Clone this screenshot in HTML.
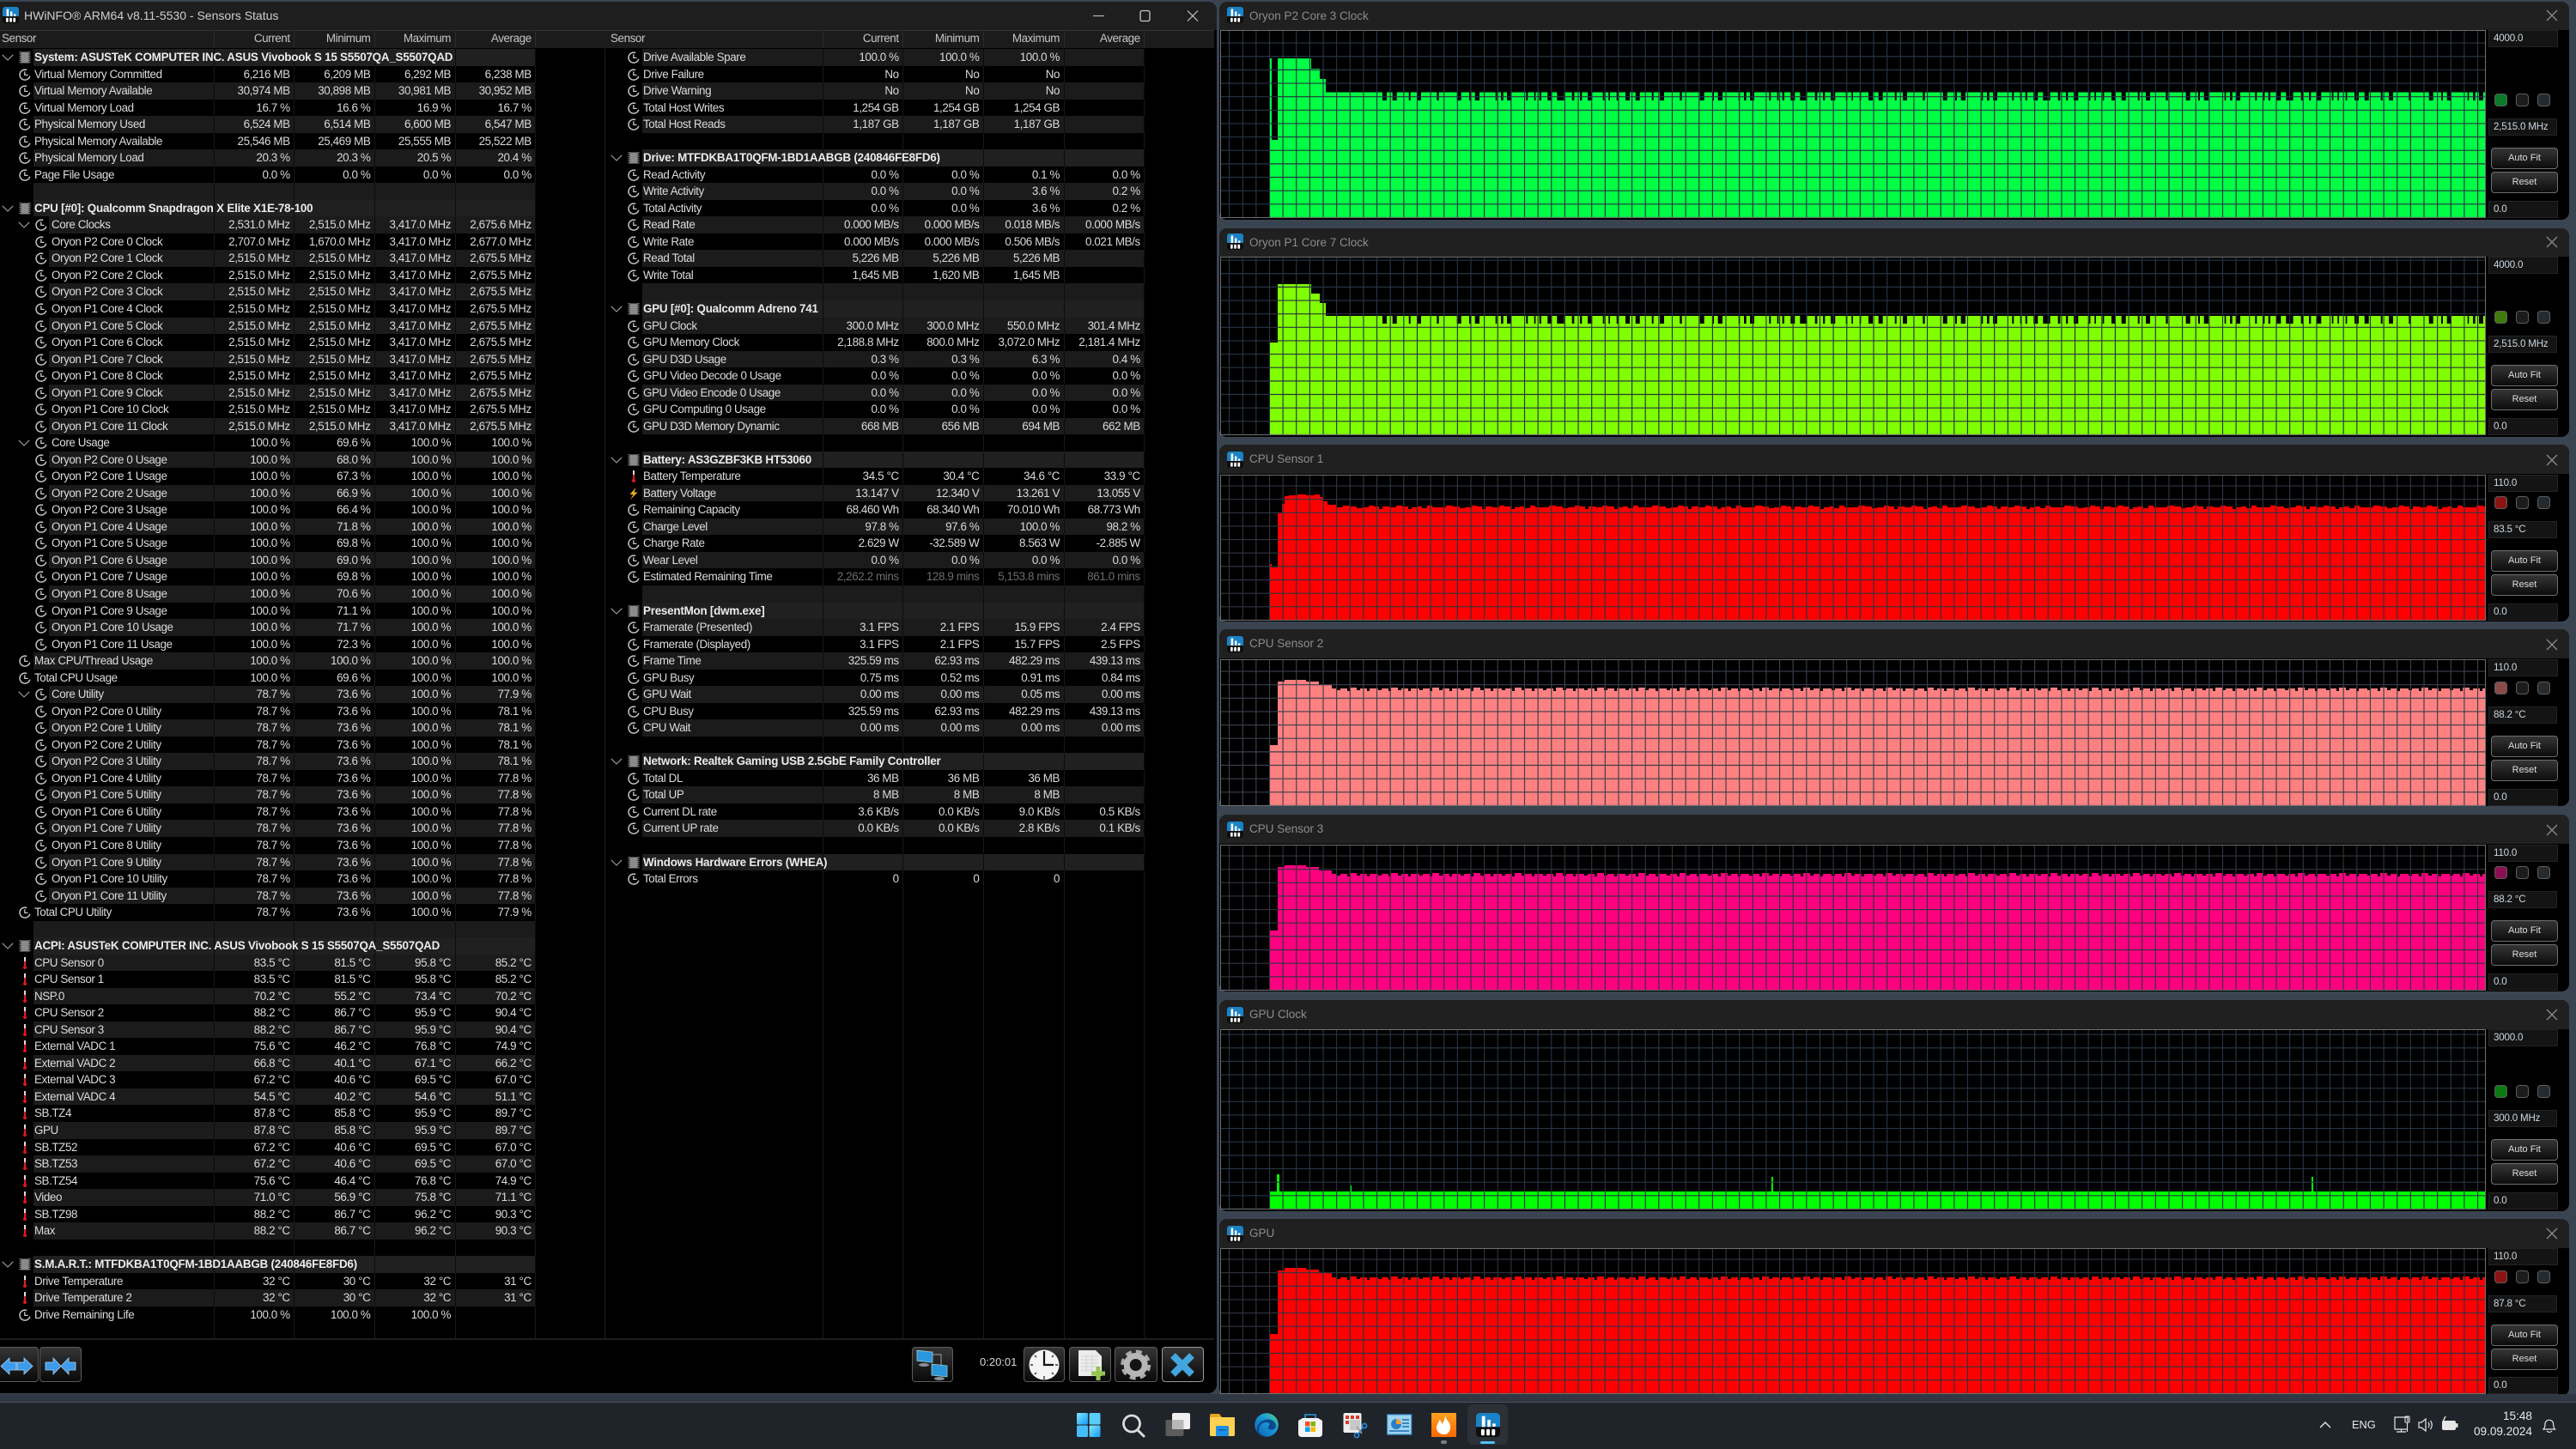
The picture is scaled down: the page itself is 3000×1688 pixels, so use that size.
<!DOCTYPE html>
<html><head><meta charset="utf-8"><title>HWiNFO Sensors Status</title>
<style>
*{box-sizing:border-box}
html,body{margin:0;padding:0}
body{width:3000px;height:1688px;overflow:hidden;position:relative;background:#3a4451;font-family:"Liberation Sans",sans-serif;color:#d6d6d6}
.main{position:absolute;left:-4px;top:2px;width:1421px;height:1621px;background:#000;border-radius:0 10px 10px 0}
.tt{position:absolute;left:0;top:0;width:1421px;height:33px;background:#1e1e1e;border-radius:0 10px 0 0}
.ttx{position:absolute;left:28px;top:9px;font-size:14px;line-height:18px;color:#cfcfcf;white-space:nowrap}
.hbar{position:absolute;left:0;top:35px;width:1414px;height:21px;background:#1b1b1b;border-top:1px solid #333}
.sep{position:absolute;left:704px;top:36px;width:1px;height:1523px;background:#1e1e1e}
.bl{position:absolute;left:0;top:1559px;width:1414px;height:2px;background:#1c1f22}
.pn{position:absolute;top:57px;width:624px;height:1502px;font-size:13.4px;letter-spacing:-.4px;--d:#15191f;background-image:linear-gradient(var(--d),var(--d)),linear-gradient(var(--d),var(--d)),linear-gradient(var(--d),var(--d)),linear-gradient(var(--d),var(--d)),linear-gradient(var(--d),var(--d));background-size:1px 100%;background-repeat:no-repeat;background-position:249px 0,342px 0,436px 0,530px 0,623px 0}
.r{position:relative;display:flex;height:19.54px;line-height:19.54px;padding-left:249px;width:624px;white-space:nowrap;--g:39px}
.l{--g:57px}
.a,.h{--b:#1b1b1b;--d:#0c0c0c;background-image:linear-gradient(var(--d),var(--d)),linear-gradient(var(--d),var(--d)),linear-gradient(var(--d),var(--d)),linear-gradient(var(--d),var(--d)),linear-gradient(var(--d),var(--d)),linear-gradient(90deg,#000 var(--g),var(--b) var(--g));background-size:1px 100%,1px 100%,1px 100%,1px 100%,1px 100%,100% 100%;background-repeat:no-repeat;background-position:249px 0,342px 0,436px 0,530px 0,623px 0,0 0}
.h{--b:#202020}
em{position:absolute;left:40px;top:0;font-style:normal;color:#dcdcdc}
.l em{left:60px}
b{position:absolute;left:40px;top:0;letter-spacing:-.22px;color:#ececec;font-weight:700}
u{display:block;text-decoration:none;width:93.7px;text-align:right;padding-right:5px;color:#dadada}
.g u{color:#6d6d6d}
.r svg{position:absolute}
.c{left:2px;top:6px;width:14px;height:8px}
.l .c{left:21px}
.i{left:22px;top:3px;width:14px;height:14px}
.l .i{left:41px}
.hd{position:absolute;top:36px;height:19px;line-height:18px;font-size:13.4px;letter-spacing:-.4px;color:#c6c6c6;border:0;background-image:linear-gradient(#2c2c2c,#2c2c2c),linear-gradient(#2c2c2c,#2c2c2c),linear-gradient(#2c2c2c,#2c2c2c),linear-gradient(#2c2c2c,#2c2c2c),linear-gradient(#2c2c2c,#2c2c2c);background-size:1px 100%;background-repeat:no-repeat;background-position:249px 0,342px 0,436px 0,530px 0,623px 0}
.hd u{color:#c6c6c6}
.hd em{left:2px;color:#c6c6c6}
.tb{position:absolute;top:1569px;height:41px;border:1px solid #5c5c5c;border-radius:4px;background:linear-gradient(#353535,#090909)}
.tm{position:absolute;left:1141px;top:1578px;font-size:13px;line-height:18px;color:#d3d7db}
.w{position:absolute;left:1420px;width:1572px;background:#000;border-radius:9px}
.wt{position:absolute;left:0;top:0;width:100%;height:33px;background:#202020;border-radius:9px 9px 0 0}
.wn{position:absolute;left:35px;top:8px;font-size:13.5px;line-height:18px;color:#8c8c8c;white-space:nowrap}
.chart{position:absolute;left:1421px;display:block}
.bx{position:absolute;left:2898px;height:20px;width:81px;background:#141414;border:1px solid #232323;font-size:11.6px;line-height:18px;padding-left:5px;letter-spacing:-.2px;color:#cdd6de;white-space:nowrap}
.sq{position:absolute;width:15px;height:15px;border:1.5px solid #5e5e5e;border-radius:4px;background:#1c1c1c}
.bt{position:absolute;left:2901px;width:78px;height:25px;border:1px solid #6e6e6e;border-radius:4px;background:linear-gradient(#353535,#0c0c0c);text-align:center;font-size:11px;line-height:23px;color:#dcdcdc}
.tbar{position:absolute;left:0;top:1633px;width:3000px;height:55px;background:#1f232a;border-top:1px solid #4c5158}
.bnd{position:absolute;left:0;top:1624px;width:3000px;height:9px;background:#2f3842}
.tx{position:absolute;color:#e8eaec;white-space:nowrap}
.ov{position:absolute;left:0;top:0}
</style></head><body>
<svg width="0" height="0" style="position:absolute">
<defs>
<symbol id="k" viewBox="0 0 14 14"><path d="M9.2 1.5A6 6 0 1 0 12.8 8.7" fill="none" stroke="#c8c8c8" stroke-width="1.5"/><path d="M6.8 3.2V7.4H10.6" fill="none" stroke="#c8c8c8" stroke-width="1.3"/></symbol>
<symbol id="p" viewBox="0 0 14 14"><rect x="2.5" y="0.5" width="9" height="13" fill="#8a8a8a"/><path d="M1.5 0V14M12.5 0V14" stroke="#777" stroke-width="2" stroke-dasharray="1.4 1"/></symbol>
<symbol id="t" viewBox="0 0 14 14"><rect x="6" y="0" width="2" height="6" fill="#e8d8d8"/><rect x="6" y="5" width="2" height="7" fill="#e02020"/><circle cx="7" cy="12" r="2" fill="#e01818"/></symbol>
<symbol id="z" viewBox="0 0 14 14"><path d="M9.5 0L2.5 8H6.5L3 14L11.5 5.5H7.5Z" fill="#f0b020"/></symbol>
<symbol id="v" viewBox="0 0 14 8"><path d="M.8 .8L7 7L13.2 .8" fill="none" stroke="#a0a0a0" stroke-width="1.1"/></symbol>
<symbol id="h" viewBox="0 0 19 19"><rect width="19" height="19" rx="3" fill="#0e0e0e"/><path d="M3 0H16A3 3 0 0 1 19 3V11H0V3A3 3 0 0 1 3 0Z" fill="#1b82c5"/><rect x="4.6" y="2.5" width="2.6" height="8.5" fill="#fff"/><rect x="9" y="5.5" width="2.4" height="5.5" fill="#fff"/><rect x="13" y="8.4" width="2.4" height="2.4" fill="#fff"/><rect x="4" y="12.8" width="2.7" height="5" rx="1" fill="#fff"/><rect x="8.2" y="12.8" width="2.7" height="5" rx="1" fill="#fff"/><rect x="12.4" y="12.8" width="2.7" height="5" rx="1" fill="#fff"/></symbol>
<pattern id="n" patternUnits="userSpaceOnUse" width="283" height="300"><path fill="#000" d="M0 0h5V300H0zM11.7 0h5V300h-5zM30.7 0h2V300h-2zM40 0h5V300h-5zM63.3 0h2.4V300h-2.4zM86.7 0h5V300h-5zM101 0h2V300h-2zM107.7 0h5.3V300h-5.3zM131.7 0h1.6V300h-1.6zM138 0h2.7V300h-2.7zM145 0h5V300h-5zM167.3 0h2V300h-2zM176.7 0h1.7V300h-1.7zM182.7 0h2.3V300h-2.3zM192.3 0h5V300h-5zM203.3 0h8.3V300h-8.3zM220.7 0h2.7V300h-2.7zM230 0h2.3V300H230zM239 0h5.3V300H239zM256.7 0h1.7V300h-1.7zM263.3 0h1.7V300h-1.7zM272.7 0h1.7V300h-1.7z"/></pattern>
<pattern id="j" patternUnits="userSpaceOnUse" width="120" height="8"><path fill="#000" d="M0 0H120V3H112V1H106V4H100V2H94V3H88V5H84V2H76V1H70V3H62V2H54V5H50V2H44V1H38V3H30V4H24V2H16V1H8V3H0Z"/></pattern>
<pattern id="e" patternUnits="userSpaceOnUse" width="48" height="8"><path fill="#000" d="M0 0H48V2H44V5H41V2H33V4H29V1H21V5H18V2H10V4H6V2H0Z"/></pattern>
<linearGradient id="wg" x1="0" y1="0" x2="1" y2="1"><stop offset="0" stop-color="#85e6ff"/><stop offset="1" stop-color="#129af0"/></linearGradient>
<linearGradient id="eg" x1="0" y1="1" x2="1" y2="0"><stop offset="0" stop-color="#0b5fb0"/><stop offset=".6" stop-color="#1c9ad8"/><stop offset="1" stop-color="#4fd88a"/></linearGradient>
<linearGradient id="fg" x1="0" y1="0" x2="0" y2="1"><stop offset="0" stop-color="#ffa020"/><stop offset="1" stop-color="#ff6a00"/></linearGradient>
</defs>
</svg>

<div class="main"><div class="tt"></div></div>
<svg class="ov" style="left:3px;top:8px" width="19" height="19"><use href="#h"/></svg>
<div class="ttx">HWiNFO® ARM64 v8.11-5530 - Sensors Status</div>
<svg class="ov" style="left:1270px;top:10px" width="130" height="18"><path d="M3 8.5H16" stroke="#b8b8b8" stroke-width="1.2"/><rect x="58" y="2.5" width="11" height="12" rx="2" fill="none" stroke="#c8c8c8" stroke-width="1.3"/><path d="M113 2.5L125 14.5M125 2.5L113 14.5" stroke="#c8c8c8" stroke-width="1.2"/></svg>
<div class="hbar"></div>
<div class="sep"></div>
<div class="r hd" style="left:0"><em>Sensor</em><u>Current</u><u>Minimum</u><u>Maximum</u><u>Average</u></div>
<div class="r hd" style="left:709px"><em>Sensor</em><u>Current</u><u>Minimum</u><u>Maximum</u><u>Average</u></div>

<div class="pn" style="left:0">
<div class="r h"><svg class="c"><use href="#v"/></svg><svg class="i"><use href="#p"/></svg><b>System: ASUSTeK COMPUTER INC. ASUS Vivobook S 15 S5507QA_S5507QAD</b></div>
<div class="r"><svg class="i"><use href="#k"/></svg><em>Virtual Memory Committed</em><u>6,216 MB</u><u>6,209 MB</u><u>6,292 MB</u><u>6,238 MB</u></div>
<div class="r a"><svg class="i"><use href="#k"/></svg><em>Virtual Memory Available</em><u>30,974 MB</u><u>30,898 MB</u><u>30,981 MB</u><u>30,952 MB</u></div>
<div class="r"><svg class="i"><use href="#k"/></svg><em>Virtual Memory Load</em><u>16.7 %</u><u>16.6 %</u><u>16.9 %</u><u>16.7 %</u></div>
<div class="r a"><svg class="i"><use href="#k"/></svg><em>Physical Memory Used</em><u>6,524 MB</u><u>6,514 MB</u><u>6,600 MB</u><u>6,547 MB</u></div>
<div class="r"><svg class="i"><use href="#k"/></svg><em>Physical Memory Available</em><u>25,546 MB</u><u>25,469 MB</u><u>25,555 MB</u><u>25,522 MB</u></div>
<div class="r a"><svg class="i"><use href="#k"/></svg><em>Physical Memory Load</em><u>20.3 %</u><u>20.3 %</u><u>20.5 %</u><u>20.4 %</u></div>
<div class="r"><svg class="i"><use href="#k"/></svg><em>Page File Usage</em><u>0.0 %</u><u>0.0 %</u><u>0.0 %</u><u>0.0 %</u></div>
<div class="r a"></div>
<div class="r h"><svg class="c"><use href="#v"/></svg><svg class="i"><use href="#p"/></svg><b>CPU [#0]: Qualcomm Snapdragon X Elite X1E-78-100</b></div>
<div class="r a l"><svg class="c"><use href="#v"/></svg><svg class="i"><use href="#k"/></svg><em>Core Clocks</em><u>2,531.0 MHz</u><u>2,515.0 MHz</u><u>3,417.0 MHz</u><u>2,675.6 MHz</u></div>
<div class="r l"><svg class="i"><use href="#k"/></svg><em>Oryon P2 Core 0 Clock</em><u>2,707.0 MHz</u><u>1,670.0 MHz</u><u>3,417.0 MHz</u><u>2,677.0 MHz</u></div>
<div class="r a l"><svg class="i"><use href="#k"/></svg><em>Oryon P2 Core 1 Clock</em><u>2,515.0 MHz</u><u>2,515.0 MHz</u><u>3,417.0 MHz</u><u>2,675.5 MHz</u></div>
<div class="r l"><svg class="i"><use href="#k"/></svg><em>Oryon P2 Core 2 Clock</em><u>2,515.0 MHz</u><u>2,515.0 MHz</u><u>3,417.0 MHz</u><u>2,675.5 MHz</u></div>
<div class="r a l"><svg class="i"><use href="#k"/></svg><em>Oryon P2 Core 3 Clock</em><u>2,515.0 MHz</u><u>2,515.0 MHz</u><u>3,417.0 MHz</u><u>2,675.5 MHz</u></div>
<div class="r l"><svg class="i"><use href="#k"/></svg><em>Oryon P1 Core 4 Clock</em><u>2,515.0 MHz</u><u>2,515.0 MHz</u><u>3,417.0 MHz</u><u>2,675.5 MHz</u></div>
<div class="r a l"><svg class="i"><use href="#k"/></svg><em>Oryon P1 Core 5 Clock</em><u>2,515.0 MHz</u><u>2,515.0 MHz</u><u>3,417.0 MHz</u><u>2,675.5 MHz</u></div>
<div class="r l"><svg class="i"><use href="#k"/></svg><em>Oryon P1 Core 6 Clock</em><u>2,515.0 MHz</u><u>2,515.0 MHz</u><u>3,417.0 MHz</u><u>2,675.5 MHz</u></div>
<div class="r a l"><svg class="i"><use href="#k"/></svg><em>Oryon P1 Core 7 Clock</em><u>2,515.0 MHz</u><u>2,515.0 MHz</u><u>3,417.0 MHz</u><u>2,675.5 MHz</u></div>
<div class="r l"><svg class="i"><use href="#k"/></svg><em>Oryon P1 Core 8 Clock</em><u>2,515.0 MHz</u><u>2,515.0 MHz</u><u>3,417.0 MHz</u><u>2,675.5 MHz</u></div>
<div class="r a l"><svg class="i"><use href="#k"/></svg><em>Oryon P1 Core 9 Clock</em><u>2,515.0 MHz</u><u>2,515.0 MHz</u><u>3,417.0 MHz</u><u>2,675.5 MHz</u></div>
<div class="r l"><svg class="i"><use href="#k"/></svg><em>Oryon P1 Core 10 Clock</em><u>2,515.0 MHz</u><u>2,515.0 MHz</u><u>3,417.0 MHz</u><u>2,675.5 MHz</u></div>
<div class="r a l"><svg class="i"><use href="#k"/></svg><em>Oryon P1 Core 11 Clock</em><u>2,515.0 MHz</u><u>2,515.0 MHz</u><u>3,417.0 MHz</u><u>2,675.5 MHz</u></div>
<div class="r l"><svg class="c"><use href="#v"/></svg><svg class="i"><use href="#k"/></svg><em>Core Usage</em><u>100.0 %</u><u>69.6 %</u><u>100.0 %</u><u>100.0 %</u></div>
<div class="r a l"><svg class="i"><use href="#k"/></svg><em>Oryon P2 Core 0 Usage</em><u>100.0 %</u><u>68.0 %</u><u>100.0 %</u><u>100.0 %</u></div>
<div class="r l"><svg class="i"><use href="#k"/></svg><em>Oryon P2 Core 1 Usage</em><u>100.0 %</u><u>67.3 %</u><u>100.0 %</u><u>100.0 %</u></div>
<div class="r a l"><svg class="i"><use href="#k"/></svg><em>Oryon P2 Core 2 Usage</em><u>100.0 %</u><u>66.9 %</u><u>100.0 %</u><u>100.0 %</u></div>
<div class="r l"><svg class="i"><use href="#k"/></svg><em>Oryon P2 Core 3 Usage</em><u>100.0 %</u><u>66.4 %</u><u>100.0 %</u><u>100.0 %</u></div>
<div class="r a l"><svg class="i"><use href="#k"/></svg><em>Oryon P1 Core 4 Usage</em><u>100.0 %</u><u>71.8 %</u><u>100.0 %</u><u>100.0 %</u></div>
<div class="r l"><svg class="i"><use href="#k"/></svg><em>Oryon P1 Core 5 Usage</em><u>100.0 %</u><u>69.8 %</u><u>100.0 %</u><u>100.0 %</u></div>
<div class="r a l"><svg class="i"><use href="#k"/></svg><em>Oryon P1 Core 6 Usage</em><u>100.0 %</u><u>69.0 %</u><u>100.0 %</u><u>100.0 %</u></div>
<div class="r l"><svg class="i"><use href="#k"/></svg><em>Oryon P1 Core 7 Usage</em><u>100.0 %</u><u>69.8 %</u><u>100.0 %</u><u>100.0 %</u></div>
<div class="r a l"><svg class="i"><use href="#k"/></svg><em>Oryon P1 Core 8 Usage</em><u>100.0 %</u><u>70.6 %</u><u>100.0 %</u><u>100.0 %</u></div>
<div class="r l"><svg class="i"><use href="#k"/></svg><em>Oryon P1 Core 9 Usage</em><u>100.0 %</u><u>71.1 %</u><u>100.0 %</u><u>100.0 %</u></div>
<div class="r a l"><svg class="i"><use href="#k"/></svg><em>Oryon P1 Core 10 Usage</em><u>100.0 %</u><u>71.7 %</u><u>100.0 %</u><u>100.0 %</u></div>
<div class="r l"><svg class="i"><use href="#k"/></svg><em>Oryon P1 Core 11 Usage</em><u>100.0 %</u><u>72.3 %</u><u>100.0 %</u><u>100.0 %</u></div>
<div class="r a"><svg class="i"><use href="#k"/></svg><em>Max CPU/Thread Usage</em><u>100.0 %</u><u>100.0 %</u><u>100.0 %</u><u>100.0 %</u></div>
<div class="r"><svg class="i"><use href="#k"/></svg><em>Total CPU Usage</em><u>100.0 %</u><u>69.6 %</u><u>100.0 %</u><u>100.0 %</u></div>
<div class="r a l"><svg class="c"><use href="#v"/></svg><svg class="i"><use href="#k"/></svg><em>Core Utility</em><u>78.7 %</u><u>73.6 %</u><u>100.0 %</u><u>77.9 %</u></div>
<div class="r l"><svg class="i"><use href="#k"/></svg><em>Oryon P2 Core 0 Utility</em><u>78.7 %</u><u>73.6 %</u><u>100.0 %</u><u>78.1 %</u></div>
<div class="r a l"><svg class="i"><use href="#k"/></svg><em>Oryon P2 Core 1 Utility</em><u>78.7 %</u><u>73.6 %</u><u>100.0 %</u><u>78.1 %</u></div>
<div class="r l"><svg class="i"><use href="#k"/></svg><em>Oryon P2 Core 2 Utility</em><u>78.7 %</u><u>73.6 %</u><u>100.0 %</u><u>78.1 %</u></div>
<div class="r a l"><svg class="i"><use href="#k"/></svg><em>Oryon P2 Core 3 Utility</em><u>78.7 %</u><u>73.6 %</u><u>100.0 %</u><u>78.1 %</u></div>
<div class="r l"><svg class="i"><use href="#k"/></svg><em>Oryon P1 Core 4 Utility</em><u>78.7 %</u><u>73.6 %</u><u>100.0 %</u><u>77.8 %</u></div>
<div class="r a l"><svg class="i"><use href="#k"/></svg><em>Oryon P1 Core 5 Utility</em><u>78.7 %</u><u>73.6 %</u><u>100.0 %</u><u>77.8 %</u></div>
<div class="r l"><svg class="i"><use href="#k"/></svg><em>Oryon P1 Core 6 Utility</em><u>78.7 %</u><u>73.6 %</u><u>100.0 %</u><u>77.8 %</u></div>
<div class="r a l"><svg class="i"><use href="#k"/></svg><em>Oryon P1 Core 7 Utility</em><u>78.7 %</u><u>73.6 %</u><u>100.0 %</u><u>77.8 %</u></div>
<div class="r l"><svg class="i"><use href="#k"/></svg><em>Oryon P1 Core 8 Utility</em><u>78.7 %</u><u>73.6 %</u><u>100.0 %</u><u>77.8 %</u></div>
<div class="r a l"><svg class="i"><use href="#k"/></svg><em>Oryon P1 Core 9 Utility</em><u>78.7 %</u><u>73.6 %</u><u>100.0 %</u><u>77.8 %</u></div>
<div class="r l"><svg class="i"><use href="#k"/></svg><em>Oryon P1 Core 10 Utility</em><u>78.7 %</u><u>73.6 %</u><u>100.0 %</u><u>77.8 %</u></div>
<div class="r a l"><svg class="i"><use href="#k"/></svg><em>Oryon P1 Core 11 Utility</em><u>78.7 %</u><u>73.6 %</u><u>100.0 %</u><u>77.8 %</u></div>
<div class="r"><svg class="i"><use href="#k"/></svg><em>Total CPU Utility</em><u>78.7 %</u><u>73.6 %</u><u>100.0 %</u><u>77.9 %</u></div>
<div class="r a"></div>
<div class="r h"><svg class="c"><use href="#v"/></svg><svg class="i"><use href="#p"/></svg><b>ACPI: ASUSTeK COMPUTER INC. ASUS Vivobook S 15 S5507QA_S5507QAD</b></div>
<div class="r a"><svg class="i"><use href="#t"/></svg><em>CPU Sensor 0</em><u>83.5 °C</u><u>81.5 °C</u><u>95.8 °C</u><u>85.2 °C</u></div>
<div class="r"><svg class="i"><use href="#t"/></svg><em>CPU Sensor 1</em><u>83.5 °C</u><u>81.5 °C</u><u>95.8 °C</u><u>85.2 °C</u></div>
<div class="r a"><svg class="i"><use href="#t"/></svg><em>NSP.0</em><u>70.2 °C</u><u>55.2 °C</u><u>73.4 °C</u><u>70.2 °C</u></div>
<div class="r"><svg class="i"><use href="#t"/></svg><em>CPU Sensor 2</em><u>88.2 °C</u><u>86.7 °C</u><u>95.9 °C</u><u>90.4 °C</u></div>
<div class="r a"><svg class="i"><use href="#t"/></svg><em>CPU Sensor 3</em><u>88.2 °C</u><u>86.7 °C</u><u>95.9 °C</u><u>90.4 °C</u></div>
<div class="r"><svg class="i"><use href="#t"/></svg><em>External VADC 1</em><u>75.6 °C</u><u>46.2 °C</u><u>76.8 °C</u><u>74.9 °C</u></div>
<div class="r a"><svg class="i"><use href="#t"/></svg><em>External VADC 2</em><u>66.8 °C</u><u>40.1 °C</u><u>67.1 °C</u><u>66.2 °C</u></div>
<div class="r"><svg class="i"><use href="#t"/></svg><em>External VADC 3</em><u>67.2 °C</u><u>40.6 °C</u><u>69.5 °C</u><u>67.0 °C</u></div>
<div class="r a"><svg class="i"><use href="#t"/></svg><em>External VADC 4</em><u>54.5 °C</u><u>40.2 °C</u><u>54.6 °C</u><u>51.1 °C</u></div>
<div class="r"><svg class="i"><use href="#t"/></svg><em>SB.TZ4</em><u>87.8 °C</u><u>85.8 °C</u><u>95.9 °C</u><u>89.7 °C</u></div>
<div class="r a"><svg class="i"><use href="#t"/></svg><em>GPU</em><u>87.8 °C</u><u>85.8 °C</u><u>95.9 °C</u><u>89.7 °C</u></div>
<div class="r"><svg class="i"><use href="#t"/></svg><em>SB.TZ52</em><u>67.2 °C</u><u>40.6 °C</u><u>69.5 °C</u><u>67.0 °C</u></div>
<div class="r a"><svg class="i"><use href="#t"/></svg><em>SB.TZ53</em><u>67.2 °C</u><u>40.6 °C</u><u>69.5 °C</u><u>67.0 °C</u></div>
<div class="r"><svg class="i"><use href="#t"/></svg><em>SB.TZ54</em><u>75.6 °C</u><u>46.4 °C</u><u>76.8 °C</u><u>74.9 °C</u></div>
<div class="r a"><svg class="i"><use href="#t"/></svg><em>Video</em><u>71.0 °C</u><u>56.9 °C</u><u>75.8 °C</u><u>71.1 °C</u></div>
<div class="r"><svg class="i"><use href="#t"/></svg><em>SB.TZ98</em><u>88.2 °C</u><u>86.7 °C</u><u>96.2 °C</u><u>90.3 °C</u></div>
<div class="r a"><svg class="i"><use href="#t"/></svg><em>Max</em><u>88.2 °C</u><u>86.7 °C</u><u>96.2 °C</u><u>90.3 °C</u></div>
<div class="r"></div>
<div class="r h"><svg class="c"><use href="#v"/></svg><svg class="i"><use href="#p"/></svg><b>S.M.A.R.T.: MTFDKBA1T0QFM-1BD1AABGB (240846FE8FD6)</b></div>
<div class="r"><svg class="i"><use href="#t"/></svg><em>Drive Temperature</em><u>32 °C</u><u>30 °C</u><u>32 °C</u><u>31 °C</u></div>
<div class="r a"><svg class="i"><use href="#t"/></svg><em>Drive Temperature 2</em><u>32 °C</u><u>30 °C</u><u>32 °C</u><u>31 °C</u></div>
<div class="r"><svg class="i"><use href="#k"/></svg><em>Drive Remaining Life</em><u>100.0 %</u><u>100.0 %</u><u>100.0 %</u></div>
</div>

<div class="pn" style="left:709px">
<div class="r a"><svg class="i"><use href="#k"/></svg><em>Drive Available Spare</em><u>100.0 %</u><u>100.0 %</u><u>100.0 %</u></div>
<div class="r"><svg class="i"><use href="#k"/></svg><em>Drive Failure</em><u>No</u><u>No</u><u>No</u></div>
<div class="r a"><svg class="i"><use href="#k"/></svg><em>Drive Warning</em><u>No</u><u>No</u><u>No</u></div>
<div class="r"><svg class="i"><use href="#k"/></svg><em>Total Host Writes</em><u>1,254 GB</u><u>1,254 GB</u><u>1,254 GB</u></div>
<div class="r a"><svg class="i"><use href="#k"/></svg><em>Total Host Reads</em><u>1,187 GB</u><u>1,187 GB</u><u>1,187 GB</u></div>
<div class="r"></div>
<div class="r h"><svg class="c"><use href="#v"/></svg><svg class="i"><use href="#p"/></svg><b>Drive: MTFDKBA1T0QFM-1BD1AABGB (240846FE8FD6)</b></div>
<div class="r"><svg class="i"><use href="#k"/></svg><em>Read Activity</em><u>0.0 %</u><u>0.0 %</u><u>0.1 %</u><u>0.0 %</u></div>
<div class="r a"><svg class="i"><use href="#k"/></svg><em>Write Activity</em><u>0.0 %</u><u>0.0 %</u><u>3.6 %</u><u>0.2 %</u></div>
<div class="r"><svg class="i"><use href="#k"/></svg><em>Total Activity</em><u>0.0 %</u><u>0.0 %</u><u>3.6 %</u><u>0.2 %</u></div>
<div class="r a"><svg class="i"><use href="#k"/></svg><em>Read Rate</em><u>0.000 MB/s</u><u>0.000 MB/s</u><u>0.018 MB/s</u><u>0.000 MB/s</u></div>
<div class="r"><svg class="i"><use href="#k"/></svg><em>Write Rate</em><u>0.000 MB/s</u><u>0.000 MB/s</u><u>0.506 MB/s</u><u>0.021 MB/s</u></div>
<div class="r a"><svg class="i"><use href="#k"/></svg><em>Read Total</em><u>5,226 MB</u><u>5,226 MB</u><u>5,226 MB</u></div>
<div class="r"><svg class="i"><use href="#k"/></svg><em>Write Total</em><u>1,645 MB</u><u>1,620 MB</u><u>1,645 MB</u></div>
<div class="r a"></div>
<div class="r h"><svg class="c"><use href="#v"/></svg><svg class="i"><use href="#p"/></svg><b>GPU [#0]: Qualcomm Adreno 741</b></div>
<div class="r a"><svg class="i"><use href="#k"/></svg><em>GPU Clock</em><u>300.0 MHz</u><u>300.0 MHz</u><u>550.0 MHz</u><u>301.4 MHz</u></div>
<div class="r"><svg class="i"><use href="#k"/></svg><em>GPU Memory Clock</em><u>2,188.8 MHz</u><u>800.0 MHz</u><u>3,072.0 MHz</u><u>2,181.4 MHz</u></div>
<div class="r a"><svg class="i"><use href="#k"/></svg><em>GPU D3D Usage</em><u>0.3 %</u><u>0.3 %</u><u>6.3 %</u><u>0.4 %</u></div>
<div class="r"><svg class="i"><use href="#k"/></svg><em>GPU Video Decode 0 Usage</em><u>0.0 %</u><u>0.0 %</u><u>0.0 %</u><u>0.0 %</u></div>
<div class="r a"><svg class="i"><use href="#k"/></svg><em>GPU Video Encode 0 Usage</em><u>0.0 %</u><u>0.0 %</u><u>0.0 %</u><u>0.0 %</u></div>
<div class="r"><svg class="i"><use href="#k"/></svg><em>GPU Computing 0 Usage</em><u>0.0 %</u><u>0.0 %</u><u>0.0 %</u><u>0.0 %</u></div>
<div class="r a"><svg class="i"><use href="#k"/></svg><em>GPU D3D Memory Dynamic</em><u>668 MB</u><u>656 MB</u><u>694 MB</u><u>662 MB</u></div>
<div class="r"></div>
<div class="r h"><svg class="c"><use href="#v"/></svg><svg class="i"><use href="#p"/></svg><b>Battery: AS3GZBF3KB HT53060</b></div>
<div class="r"><svg class="i"><use href="#t"/></svg><em>Battery Temperature</em><u>34.5 °C</u><u>30.4 °C</u><u>34.6 °C</u><u>33.9 °C</u></div>
<div class="r a"><svg class="i"><use href="#z"/></svg><em>Battery Voltage</em><u>13.147 V</u><u>12.340 V</u><u>13.261 V</u><u>13.055 V</u></div>
<div class="r"><svg class="i"><use href="#k"/></svg><em>Remaining Capacity</em><u>68.460 Wh</u><u>68.340 Wh</u><u>70.010 Wh</u><u>68.773 Wh</u></div>
<div class="r a"><svg class="i"><use href="#k"/></svg><em>Charge Level</em><u>97.8 %</u><u>97.6 %</u><u>100.0 %</u><u>98.2 %</u></div>
<div class="r"><svg class="i"><use href="#k"/></svg><em>Charge Rate</em><u>2.629 W</u><u>-32.589 W</u><u>8.563 W</u><u>-2.885 W</u></div>
<div class="r a"><svg class="i"><use href="#k"/></svg><em>Wear Level</em><u>0.0 %</u><u>0.0 %</u><u>0.0 %</u><u>0.0 %</u></div>
<div class="r g"><svg class="i"><use href="#k"/></svg><em>Estimated Remaining Time</em><u>2,262.2 mins</u><u>128.9 mins</u><u>5,153.8 mins</u><u>861.0 mins</u></div>
<div class="r a"></div>
<div class="r h"><svg class="c"><use href="#v"/></svg><svg class="i"><use href="#p"/></svg><b>PresentMon [dwm.exe]</b></div>
<div class="r a"><svg class="i"><use href="#k"/></svg><em>Framerate (Presented)</em><u>3.1 FPS</u><u>2.1 FPS</u><u>15.9 FPS</u><u>2.4 FPS</u></div>
<div class="r"><svg class="i"><use href="#k"/></svg><em>Framerate (Displayed)</em><u>3.1 FPS</u><u>2.1 FPS</u><u>15.7 FPS</u><u>2.5 FPS</u></div>
<div class="r a"><svg class="i"><use href="#k"/></svg><em>Frame Time</em><u>325.59 ms</u><u>62.93 ms</u><u>482.29 ms</u><u>439.13 ms</u></div>
<div class="r"><svg class="i"><use href="#k"/></svg><em>GPU Busy</em><u>0.75 ms</u><u>0.52 ms</u><u>0.91 ms</u><u>0.84 ms</u></div>
<div class="r a"><svg class="i"><use href="#k"/></svg><em>GPU Wait</em><u>0.00 ms</u><u>0.00 ms</u><u>0.05 ms</u><u>0.00 ms</u></div>
<div class="r"><svg class="i"><use href="#k"/></svg><em>CPU Busy</em><u>325.59 ms</u><u>62.93 ms</u><u>482.29 ms</u><u>439.13 ms</u></div>
<div class="r a"><svg class="i"><use href="#k"/></svg><em>CPU Wait</em><u>0.00 ms</u><u>0.00 ms</u><u>0.00 ms</u><u>0.00 ms</u></div>
<div class="r"></div>
<div class="r h"><svg class="c"><use href="#v"/></svg><svg class="i"><use href="#p"/></svg><b>Network: Realtek Gaming USB 2.5GbE Family Controller</b></div>
<div class="r"><svg class="i"><use href="#k"/></svg><em>Total DL</em><u>36 MB</u><u>36 MB</u><u>36 MB</u></div>
<div class="r a"><svg class="i"><use href="#k"/></svg><em>Total UP</em><u>8 MB</u><u>8 MB</u><u>8 MB</u></div>
<div class="r"><svg class="i"><use href="#k"/></svg><em>Current DL rate</em><u>3.6 KB/s</u><u>0.0 KB/s</u><u>9.0 KB/s</u><u>0.5 KB/s</u></div>
<div class="r a"><svg class="i"><use href="#k"/></svg><em>Current UP rate</em><u>0.0 KB/s</u><u>0.0 KB/s</u><u>2.8 KB/s</u><u>0.1 KB/s</u></div>
<div class="r"></div>
<div class="r h"><svg class="c"><use href="#v"/></svg><svg class="i"><use href="#p"/></svg><b>Windows Hardware Errors (WHEA)</b></div>
<div class="r"><svg class="i"><use href="#k"/></svg><em>Total Errors</em><u>0</u><u>0</u><u>0</u></div>
</div>
<div class="bl"></div>

<div class="tb" style="left:-4px;width:49px"></div>
<div class="tb" style="left:46px;width:49px"></div>
<div class="tb" style="left:1062px;width:48px"></div>
<div class="tm">0:20:01</div>
<div class="tb" style="left:1192px;width:48px"></div>
<div class="tb" style="left:1245px;width:49px"></div>
<div class="tb" style="left:1298px;width:50px"></div>
<div class="tb" style="left:1353px;width:49px;border-color:#9a9a9a"></div>

<!-- graph windows -->
<div class="w" style="top:2px;height:254px"><div class="wt"></div><div class="wn">Oryon P2 Core 3 Clock</div></div>
<div class="w" style="top:266px;height:243px"><div class="wt"></div><div class="wn">Oryon P1 Core 7 Clock</div></div>
<div class="w" style="top:518px;height:206px"><div class="wt" style="height:34px"></div><div class="wn">CPU Sensor 1</div></div>
<div class="w" style="top:733px;height:206px"><div class="wt" style="height:34px"></div><div class="wn">CPU Sensor 2</div></div>
<div class="w" style="top:949px;height:206px"><div class="wt" style="height:34px"></div><div class="wn">CPU Sensor 3</div></div>
<div class="w" style="top:1165px;height:246px"><div class="wt" style="height:34px"></div><div class="wn">GPU Clock</div></div>
<div class="w" style="top:1420px;height:206px"><div class="wt" style="height:34px"></div><div class="wn">GPU</div></div>

<svg class="chart" style="top:35px" width="1474" height="219"><rect width="1474" height="219" fill="#000"/><path fill="#00ff44" d="M57 219V33H60V128H67V33H106V45H116V57H123V72.5H1474V219Z"/><g transform="translate(189,72.5)"><rect width="1285" height="9.5" fill="url(#n)"/></g><line x1="10" y1="109.5" x2="1474" y2="109.5" stroke="#273442" stroke-width="219" stroke-dasharray="1.15 14.484"/><line x1="737" y1="219" x2="737" y2="0" stroke="#273442" stroke-width="1474" stroke-dasharray="1.15 14.49"/><path d="M.5 0V218.5H1473.5V.5H0" fill="none" stroke="#6f6f6f"/></svg>
<svg class="chart" style="top:299px" width="1474" height="208"><rect width="1474" height="208" fill="#000"/><path fill="#80ff00" d="M57 208V100H67V32H106V43H116V54H123V69H1474V208Z"/><g transform="translate(189,69)"><rect width="1285" height="9" fill="url(#n)"/></g><line x1="10" y1="104" x2="1474" y2="104" stroke="#273442" stroke-width="208" stroke-dasharray="1.15 14.484"/><line x1="737" y1="208" x2="737" y2="0" stroke="#273442" stroke-width="1474" stroke-dasharray="1.15 14.49"/><path d="M.5 0V207.5H1473.5V.5H0" fill="none" stroke="#6f6f6f"/></svg>
<svg class="chart" style="top:553px" width="1474" height="170"><rect width="1474" height="170" fill="#000"/><path fill="#ff0000" d="M58 170V104H60V108H67V45H72V34H75V25H80V24H90V23H100V24H110V23H116V26H120V31H125V35H1474V170Z"/><g transform="translate(135,35)"><rect width="1339" height="7" fill="url(#j)"/></g><line x1="10" y1="85" x2="1474" y2="85" stroke="#2f3440" stroke-width="170" stroke-dasharray="1.15 14.484"/><line x1="737" y1="170" x2="737" y2="0" stroke="#2f3440" stroke-width="1474" stroke-dasharray="1.15 14.49"/><path d="M.5 0V169.5H1473.5V.5H0" fill="none" stroke="#6f6f6f"/></svg>
<svg class="chart" style="top:768px" width="1474" height="171"><rect width="1474" height="171" fill="#000"/><path fill="#ff8080" d="M58 171V100H67V26H75V24H100V26H115V30H130V32H1474V171Z"/><g transform="translate(130,32)"><rect width="1344" height="6" fill="url(#e)"/></g><line x1="10" y1="85.5" x2="1474" y2="85.5" stroke="#3a3f4c" stroke-width="171" stroke-dasharray="1.15 14.484"/><line x1="737" y1="171" x2="737" y2="0" stroke="#3a3f4c" stroke-width="1474" stroke-dasharray="1.15 14.49"/><path d="M.5 0V170.5H1473.5V.5H0" fill="none" stroke="#6f6f6f"/></svg>
<svg class="chart" style="top:984px" width="1474" height="170"><rect width="1474" height="170" fill="#000"/><path fill="#ff0080" d="M58 170V100H67V26H75V24H100V26H115V30H130V32H1474V170Z"/><g transform="translate(130,32)"><rect width="1344" height="6" fill="url(#e)"/></g><line x1="10" y1="85" x2="1474" y2="85" stroke="#2f3440" stroke-width="170" stroke-dasharray="1.15 14.484"/><line x1="737" y1="170" x2="737" y2="0" stroke="#2f3440" stroke-width="1474" stroke-dasharray="1.15 14.49"/><path d="M.5 0V169.5H1473.5V.5H0" fill="none" stroke="#6f6f6f"/></svg>
<svg class="chart" style="top:1199px" width="1474" height="210"><rect width="1474" height="210" fill="#000"/><path fill="#00ff00" d="M57 210V189H66V169H69V189H151V182H153V189H642V172H644V189H1271V172H1273V189H1474V210Z"/><line x1="10" y1="105" x2="1474" y2="105" stroke="#273442" stroke-width="210" stroke-dasharray="1.15 14.484"/><line x1="737" y1="210" x2="737" y2="0" stroke="#273442" stroke-width="1474" stroke-dasharray="1.15 14.49"/><path d="M.5 0V209.5H1473.5V.5H0" fill="none" stroke="#6f6f6f"/></svg>
<svg class="chart" style="top:1454px" width="1474" height="170"><rect width="1474" height="170" fill="#000"/><path fill="#ff0000" d="M57 170V100H67V26H75V23H100V25H115V29H130V32H1474V170Z"/><g transform="translate(130,32)"><rect width="1344" height="6" fill="url(#e)"/></g><line x1="10" y1="85" x2="1474" y2="85" stroke="#2f3440" stroke-width="170" stroke-dasharray="1.15 14.484"/><line x1="737" y1="170" x2="737" y2="0" stroke="#2f3440" stroke-width="1474" stroke-dasharray="1.15 14.49"/><path d="M.5 0V169.5H1473.5V.5H0" fill="none" stroke="#6f6f6f"/></svg>

<!-- side controls -->
<div class="bx" style="top:35px">4000.0</div><div class="sq" style="left:2905px;top:109px;background:#0b7a2a"></div><div class="sq" style="left:2930px;top:109px"></div><div class="sq" style="left:2955px;top:109px;background:#252a2e"></div><div class="bx" style="top:138px;width:80px">2,515.0 MHz</div><div class="bt" style="top:172px">Auto Fit</div><div class="bt" style="top:200px">Reset</div><div class="bx" style="top:234px">0.0</div>
<div class="bx" style="top:299px">4000.0</div><div class="sq" style="left:2905px;top:362px;background:#3f7a0a"></div><div class="sq" style="left:2930px;top:362px"></div><div class="sq" style="left:2955px;top:362px;background:#252a2e"></div><div class="bx" style="top:391px;width:80px">2,515.0 MHz</div><div class="bt" style="top:425px">Auto Fit</div><div class="bt" style="top:453px">Reset</div><div class="bx" style="top:487px">0.0</div>
<div class="bx" style="top:553px">110.0</div><div class="sq" style="left:2905px;top:578px;background:#8a1414"></div><div class="sq" style="left:2930px;top:578px"></div><div class="sq" style="left:2955px;top:578px;background:#252a2e"></div><div class="bx" style="top:607px;width:80px">83.5 °C</div><div class="bt" style="top:641px">Auto Fit</div><div class="bt" style="top:669px">Reset</div><div class="bx" style="top:703px">0.0</div>
<div class="bx" style="top:768px">110.0</div><div class="sq" style="left:2905px;top:794px;background:#8a4a4a"></div><div class="sq" style="left:2930px;top:794px"></div><div class="sq" style="left:2955px;top:794px;background:#252a2e"></div><div class="bx" style="top:823px;width:80px">88.2 °C</div><div class="bt" style="top:857px">Auto Fit</div><div class="bt" style="top:885px">Reset</div><div class="bx" style="top:919px">0.0</div>
<div class="bx" style="top:984px">110.0</div><div class="sq" style="left:2905px;top:1009px;background:#8a1052"></div><div class="sq" style="left:2930px;top:1009px"></div><div class="sq" style="left:2955px;top:1009px;background:#252a2e"></div><div class="bx" style="top:1038px;width:80px">88.2 °C</div><div class="bt" style="top:1072px">Auto Fit</div><div class="bt" style="top:1100px">Reset</div><div class="bx" style="top:1134px">0.0</div>
<div class="bx" style="top:1199px">3000.0</div><div class="sq" style="left:2905px;top:1264px;background:#0b7a10"></div><div class="sq" style="left:2930px;top:1264px"></div><div class="sq" style="left:2955px;top:1264px;background:#252a2e"></div><div class="bx" style="top:1293px;width:80px">300.0 MHz</div><div class="bt" style="top:1327px">Auto Fit</div><div class="bt" style="top:1355px">Reset</div><div class="bx" style="top:1389px">0.0</div>
<div class="bx" style="top:1454px">110.0</div><div class="sq" style="left:2905px;top:1480px;background:#8a1414"></div><div class="sq" style="left:2930px;top:1480px"></div><div class="sq" style="left:2955px;top:1480px;background:#252a2e"></div><div class="bx" style="top:1509px;width:80px">87.8 °C</div><div class="bt" style="top:1543px">Auto Fit</div><div class="bt" style="top:1571px">Reset</div><div class="bx" style="top:1604px">0.0</div>

<div class="bnd"></div>
<div class="tbar"></div>
<div style="position:absolute;left:1709px;top:1636px;width:47px;height:47px;border-radius:6px;background:#2c3037"></div>

<!-- title icons and close glyphs, toolbar icons, taskbar icons -->
<svg class="ov" width="3000" height="1688">
<use href="#h" x="1429" y="8" width="19" height="19"/>
<use href="#h" x="1429" y="272" width="19" height="19"/>
<use href="#h" x="1429" y="526" width="19" height="19"/>
<use href="#h" x="1429" y="741" width="19" height="19"/>
<use href="#h" x="1429" y="957" width="19" height="19"/>
<use href="#h" x="1429" y="1173" width="19" height="19"/>
<use href="#h" x="1429" y="1428" width="19" height="19"/>
<path stroke="#8a8a8a" stroke-width="1.3" fill="none" d="M2966 12L2978 24M2978 12L2966 24M2966 276L2978 288M2978 276L2966 288M2966 530L2978 542M2978 530L2966 542M2966 745L2978 757M2978 745L2966 757M2966 961L2978 973M2978 961L2966 973M2966 1176L2978 1188M2978 1176L2966 1188M2966 1431L2978 1443M2978 1431L2966 1443"/>

<!-- arrows -->
<g fill="#3d9be9" stroke="#a8d2f2" stroke-width=".8">
<path d="M1 1591.5L11 1582V1587H19V1596H11V1601Z"/><path d="M38 1591.5L28 1582V1587H20V1596H28V1601Z"/>
<path d="M53 1587H62V1582L71 1591.5L62 1601V1596H53Z"/><path d="M88 1587H80V1582L71 1591.5L80 1601V1596H88Z"/>
</g>
<!-- network -->
<path d="M1082 1578H1096V1590" fill="none" stroke="#8a8a8a" stroke-width="1.2"/>
<rect x="1068" y="1573" width="18" height="12" fill="#2a96dc" stroke="#9cc" stroke-width=".8" transform="skewY(6) translate(0,-112)"/>
<ellipse cx="1076" cy="1590" rx="6" ry="2" fill="#8a8f94"/>
<rect x="1085" y="1589" width="18" height="13" fill="#2a96dc" stroke="#9cc" stroke-width=".8" transform="skewY(6) translate(0,-114)"/>
<ellipse cx="1094" cy="1606" rx="6" ry="2" fill="#8a8f94"/>
<!-- clock -->
<circle cx="1216" cy="1590" r="17.5" fill="#f4f4f4"/>
<path d="M1216 1574V1590H1227" fill="none" stroke="#111" stroke-width="2.2"/>
<path d="M1216 1603V1607M1200 1590H1203M1229 1590H1232M1205 1579L1207 1581M1227 1579L1225 1581M1205 1601L1207 1599M1227 1601L1225 1599" stroke="#333" stroke-width="1.4"/>
<!-- doc -->
<path d="M1256 1573H1276L1283 1580V1603H1256Z" fill="#ececec"/>
<path d="M1259 1580H1279M1259 1584H1279M1259 1588H1279M1259 1592H1279M1259 1596H1272M1265 1578V1598M1272 1578V1598" stroke="#c8cfc8" stroke-width=".8"/>
<path d="M1279 1592V1608M1271 1600H1287" stroke="#94c452" stroke-width="5"/>
<!-- gear -->
<circle cx="1322.7" cy="1590" r="14.5" fill="none" stroke="#a8aaac" stroke-width="6" stroke-dasharray="6.5 4.9"/>
<circle cx="1322.7" cy="1590" r="10.5" fill="none" stroke="#b4b6b8" stroke-width="7"/>
<circle cx="1322.7" cy="1590" r="6.6" fill="#141414"/>
<!-- X -->
<path d="M1366 1579L1388 1601M1388 1579L1366 1601" stroke="#43a6de" stroke-width="8"/>

<!-- taskbar -->
<g fill="url(#wg)"><rect x="1254" y="1646" width="13" height="13.5" rx="1.5"/><rect x="1268.5" y="1646" width="13" height="13.5" rx="1.5" fill="#58cdfb"/><rect x="1254" y="1660.5" width="13" height="13.5" rx="1.5" fill="#44bef8"/><rect x="1268.5" y="1660.5" width="13" height="13.5" rx="1.5"/></g>
<circle cx="1318" cy="1658.5" r="9.5" fill="none" stroke="#dcdcdc" stroke-width="2.8"/><path d="M1325 1666L1332 1673" stroke="#dcdcdc" stroke-width="3" stroke-linecap="round"/>
<rect x="1357.5" y="1654" width="21" height="19" rx="2" fill="#5c5c5c"/><rect x="1365" y="1646" width="21" height="19" rx="2" fill="#efefef"/><rect x="1365" y="1654" width="13.5" height="11" fill="#b8b8b8"/>
<path d="M1409 1649A2 2 0 0 1 1411 1647H1420L1423 1651H1438V1654H1409Z" fill="#e6a51e"/><rect x="1409" y="1651" width="29" height="22" rx="1.5" fill="#ffd152"/><rect x="1416" y="1661" width="15" height="12" rx="1.5" fill="#1c8fe6"/><rect x="1419" y="1665" width="9" height="1.5" fill="#0b5aa8"/>
<circle cx="1475" cy="1660" r="13.8" fill="url(#eg)"/><path d="M1464 1663C1466 1652 1484 1650 1486 1660C1487 1666 1478 1667 1477 1664C1476 1661 1480 1660 1478 1658C1474 1655 1467 1658 1466 1665C1465 1671 1472 1674 1478 1672.8C1470 1675 1462 1671 1464 1663Z" fill="#0a4a8c"/>
<path d="M1517 1652H1535L1540 1655V1670Q1540 1674 1536 1674H1516Q1512 1674 1512 1670V1655Z" fill="#f4f4f4"/><path d="M1520 1652V1648H1532V1652" fill="none" stroke="#2a9ae0" stroke-width="1.6"/><rect x="1520" y="1656" width="5.5" height="5.5" fill="#f25022"/><rect x="1526.5" y="1656" width="5.5" height="5.5" fill="#7fba00"/><rect x="1520" y="1662.5" width="5.5" height="5.5" fill="#00a4ef"/><rect x="1526.5" y="1662.5" width="5.5" height="5.5" fill="#ffb900"/>
<rect x="1564.5" y="1646" width="21" height="23" rx="2" fill="#ececec"/><path d="M1567 1649h4v4h-4zM1567 1655h4v4h-4zM1573 1649h4v4h-4zM1579 1649h4v4h-4z" fill="#d83a2a"/><rect x="1572" y="1654" width="12" height="12" fill="#c8c8c8"/><path d="M1580 1662L1586 1670" stroke="#999" stroke-width="1.5"/><circle cx="1589" cy="1661" r="2.6" fill="none" stroke="#2a8ee0" stroke-width="1.6"/><circle cx="1580" cy="1672" r="2.6" fill="none" stroke="#2a8ee0" stroke-width="1.6"/><path d="M1587 1663L1582 1670" stroke="#2a8ee0" stroke-width="1.4"/>
<rect x="1615.7" y="1648" width="28" height="23" fill="#9fd4ee" stroke="#3d9ad4" stroke-width="1.2"/><circle cx="1626" cy="1659" r="6" fill="#2a7fc4"/><path d="M1626 1659V1653A6 6 0 0 1 1632 1659Z" fill="#f0a030"/><rect x="1633" y="1653" width="8" height="2" fill="#3d84c4"/><rect x="1633" y="1657" width="8" height="2" fill="#3d84c4"/><rect x="1633" y="1661" width="8" height="2" fill="#3d84c4"/><rect x="1618" y="1666" width="23" height="2" fill="#3d84c4"/>
<rect x="1667" y="1646" width="29" height="28" fill="url(#fg)"/><path d="M1683 1649C1684 1655 1690 1657 1689 1664C1688 1669 1685 1671 1682 1671C1677 1671 1673 1668 1673 1663C1673 1659 1676 1658 1676 1654C1678 1655 1679 1657 1679 1659C1681 1657 1683 1653 1683 1649Z" fill="#fff"/>
<rect x="1678" y="1678" width="7" height="4" rx="2" fill="#7a7d82"/>
<use href="#h" x="1719" y="1646" width="28" height="28"/>
<rect x="1724" y="1679" width="17" height="3" rx="1.5" fill="#4cc2ff"/>

<path d="M2702 1663L2708 1657L2714 1663" fill="none" stroke="#e6e6e6" stroke-width="1.4"/>
<path d="M2804 1656V1651H2789V1665H2804M2791 1668H2802M2796.5 1665V1668" fill="none" stroke="#e6e6e6" stroke-width="1.2"/><rect x="2801" y="1650" width="5" height="7" rx="1" fill="none" stroke="#e6e6e6" stroke-width="1.1"/><path d="M2803.5 1657V1668" stroke="#e6e6e6" stroke-width="1.1"/>
<path d="M2817 1657H2820L2825 1653V1667L2820 1663H2817Z" fill="none" stroke="#e6e6e6" stroke-width="1.2"/><path d="M2828 1657Q2830 1660 2828 1663M2830.5 1655Q2834 1660 2830.5 1665" fill="none" stroke="#e6e6e6" stroke-width="1.2"/>
<rect x="2844" y="1655" width="16" height="11" rx="2" fill="#e6e6e6"/><rect x="2860" y="1658" width="2.5" height="5" rx="1" fill="#e6e6e6"/><path d="M2848 1650L2845 1656H2848L2846 1660" fill="none" stroke="#e6e6e6" stroke-width="1.4"/>
<path d="M2962 1665Q2964 1663 2964 1659A4.8 4.8 0 0 1 2973.6 1659Q2973.6 1663 2975.6 1665ZM2966 1667Q2969 1670 2972 1667" fill="none" stroke="#e6e6e6" stroke-width="1.2"/>
</svg>

<div class="tx" style="left:2739px;top:1651px;font-size:12.8px;line-height:18px">ENG</div>
<div class="tx" style="right:51px;top:1641px;font-size:13.6px;line-height:18px">15:48</div>
<div class="tx" style="right:51px;top:1659px;font-size:13.6px;line-height:18px">09.09.2024</div>
</body></html>
